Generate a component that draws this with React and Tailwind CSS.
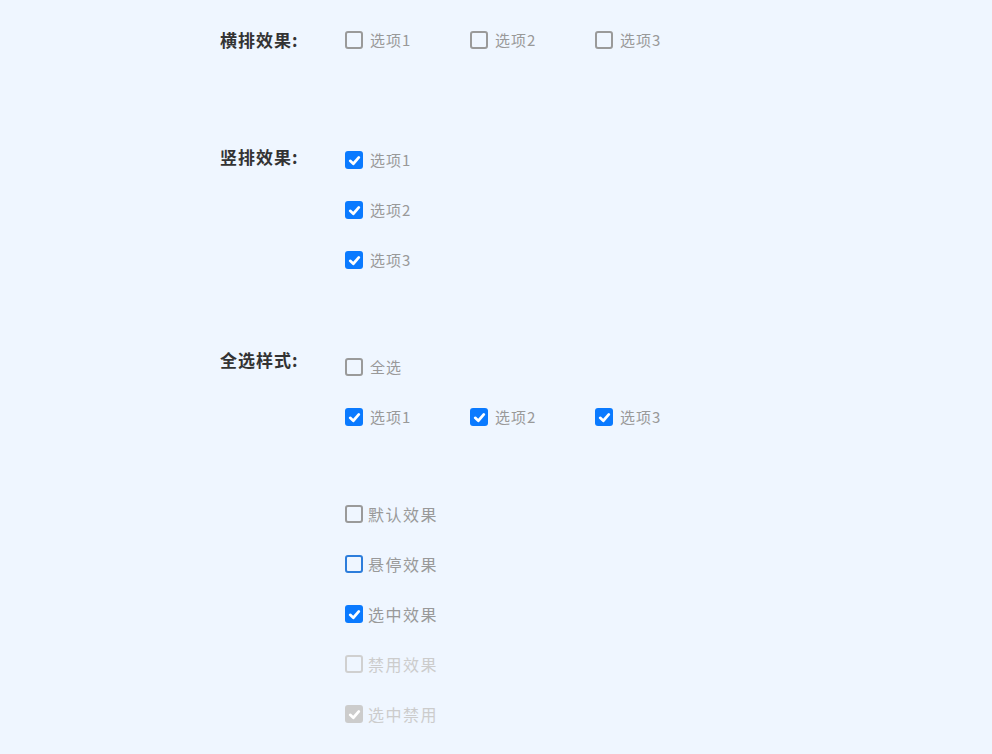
const font = { fontFamily: '"Noto Sans CJK SC", "Noto Sans", sans-serif' };

const Check = ({ checked, variant = 'default' }) => {
    if (checked) {
        const bg = variant === 'disabled' ? 'bg-[#cccccc]' : 'bg-[#0a7aff]';
        return (
            <span className={`w-[18px] h-[18px] rounded-[3px] flex items-center justify-center shrink-0 ${bg}`}>
                <svg width="13" height="13" viewBox="0 0 12 12" fill="none">
                    <path d="M2 6.3 L4.9 9 L10 3.2" stroke="#fff" strokeWidth="2.5" strokeLinecap="round" strokeLinejoin="round" />
                </svg>
            </span>
        );
    }
    const border = {
        default: 'border-[#9a9a9a]',
        hover: 'border-[#2d7ddb]',
        disabled: 'border-[#d0d0d0]',
    }[variant];
    return <span className={`w-[18px] h-[18px] rounded-[3px] border-2 shrink-0 ${border}`}></span>;
};

const Option = ({ label, checked, variant, big }) => (
    <label className={`flex items-center h-6 ${big ? 'gap-[5px]' : 'gap-[7px] w-[125px]'}`}>
        <Check checked={checked} variant={variant} />
        <span
            className={`${big ? 'text-base tracking-[1.5px]' : 'text-[15px] tracking-[1px]'} ${
                variant === 'disabled' ? 'text-[#cccccc]' : 'text-[#999999]'
            }`}
        >
            {label}
        </span>
    </label>
);

const Label = ({ children }) => (
    <div className="w-[125px] shrink-0 text-[17px] tracking-[1px] font-bold text-[#333333] leading-6">{children}</div>
);

export default function App() {
    const opts = ['选项1', '选项2', '选项3'];
    return (
        <div className="min-h-[754px] w-full bg-[#eff6ff] pl-[220px] pt-[28px]" style={font}>
            {/* 横排 */}
            <div className="flex">
                <Label>横排效果:</Label>
                <div className="flex">
                    {opts.map((o) => (
                        <Option key={o} label={o} />
                    ))}
                </div>
            </div>

            {/* 竖排 */}
            <div className="flex mt-[93px]">
                <Label>竖排效果:</Label>
                <div className="flex flex-col gap-[26px] mt-[3px]">
                    {opts.map((o) => (
                        <Option key={o} label={o} checked />
                    ))}
                </div>
            </div>

            {/* 全选 */}
            <div className="flex mt-[76px]">
                <Label>全选样式:</Label>
                <div className="flex flex-col gap-[26px] mt-[7px]">
                    <Option label="全选" />
                    <div className="flex">
                        {opts.map((o) => (
                            <Option key={o} label={o} checked />
                        ))}
                    </div>
                </div>
            </div>

            {/* 状态 */}
            <div className="flex flex-col gap-[26px] mt-[73px] pl-[125px] pb-[28px]">
                <Option big label="默认效果" />
                <Option big label="悬停效果" variant="hover" />
                <Option big label="选中效果" checked />
                <Option big label="禁用效果" variant="disabled" />
                <Option big label="选中禁用" checked variant="disabled" />
            </div>
        </div>
    );
}
